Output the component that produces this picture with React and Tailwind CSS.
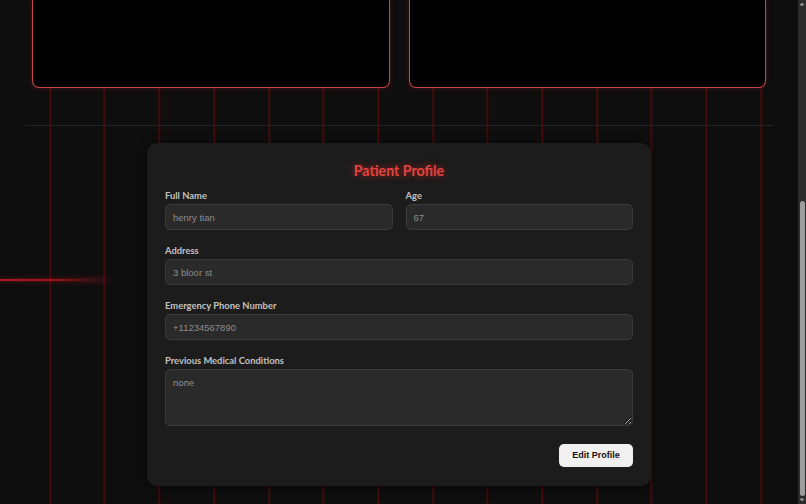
import React from 'react';

const Field = ({ label, value, className = '' }) => (
  <div className={`flex flex-col gap-[2px] ${className}`}>
    <label className="text-[9.4px] leading-[13px] font-bold text-[#c2c2c2]">{label}</label>
    <input
      readOnly
      value={value}
      className="h-[26px] w-full rounded-[5px] border border-[#3a3a3a] bg-[#2a2a2a] px-[7px] font-['Liberation_Sans',Arial,sans-serif] text-[9.5px] text-[#8d8d8d] outline-none"
    />
  </div>
);

const App = () => {
  return (
    <div className="flex h-screen w-full overflow-hidden bg-[#0e0e0e] font-['Lato','Noto_Sans',sans-serif]">
      <main className="relative flex-1 bg-[repeating-linear-gradient(90deg,transparent_0px,transparent_52.7px,#430a0a_52.7px,#430a0a_54.7px)] bg-[position:-3.7px_0]">
        {/* top cards, scrolled past */}
        <div className="mx-[32px] grid grid-cols-2 gap-[19px]">
          <div className="h-[88px] rounded-b-[7px] border-x-[1.5px] border-b-[1.5px] border-[#c94646] bg-black shadow-[0_0_5px_rgba(200,40,40,0.3)]" />
          <div className="h-[88px] rounded-b-[7px] border-x-[1.5px] border-b-[1.5px] border-[#c94646] bg-black shadow-[0_0_5px_rgba(200,40,40,0.3)]" />
        </div>

        <div className="mx-[25px] mt-[37px] h-px bg-[#252525]" />

        {/* profile card */}
        <div className="mx-auto mt-[17px] w-[504px] rounded-[10px] bg-[#1c1c1c] px-[18px] pt-[19px] pb-[19px] shadow-[0_2px_10px_rgba(0,0,0,0.5)]">
          <h2 className="text-center text-[14.2px] leading-[18px] font-bold text-[#e0443f] [text-shadow:0_0_7px_rgba(255,40,40,0.6)]">
            Patient Profile
          </h2>

          <div className="mt-[9px] grid grid-cols-2 gap-[13px]">
            <Field label="Full Name" value="henry tian" />
            <Field label="Age" value="67" />
          </div>
          <Field className="mt-[14px]" label="Address" value="3 bloor st" />
          <Field className="mt-[14px]" label="Emergency Phone Number" value="+11234567890" />

          <div className="mt-[14px] flex flex-col gap-[2px]">
            <label className="text-[9.4px] leading-[13px] font-bold text-[#c2c2c2]">Previous Medical Conditions</label>
            <textarea
              readOnly
              value="none"
              className="block h-[57px] w-full rounded-[5px] border border-[#3a3a3a] bg-[#2a2a2a] px-[7px] py-[6px] text-[9.5px] text-[#8d8d8d] outline-none"
            />
          </div>

          <div className="mt-[18px] flex justify-end">
            <button className="h-[23px] w-[74px] rounded-[5px] bg-[#f0f0f0] font-['Liberation_Sans',Arial,sans-serif] text-[9px] font-bold text-[#111]">
              Edit Profile
            </button>
          </div>
        </div>

        {/* scan line */}
        <div className="absolute top-[279px] left-0 h-[2px] w-[108px] bg-gradient-to-r from-[#b01818] via-[#a01414] to-transparent shadow-[0_0_5px_rgba(220,30,30,0.6)]" />
      </main>

      {/* scrollbar */}
      <div className="flex w-[8px] flex-col items-center bg-[#2b2b2b]">
        <svg width="8" height="8" viewBox="0 0 8 8"><path d="M1.5 5.5 L4 2.5 L6.5 5.5 Z" fill="#a0a0a0" /></svg>
        <div className="flex-1" />
        <div className="h-[295px] w-[5px] rounded-full bg-[#9c9c9c]" />
        <svg width="8" height="8" viewBox="0 0 8 8"><path d="M1.5 2.5 L4 5.5 L6.5 2.5 Z" fill="#a0a0a0" /></svg>
      </div>
    </div>
  );
};

export default App;
